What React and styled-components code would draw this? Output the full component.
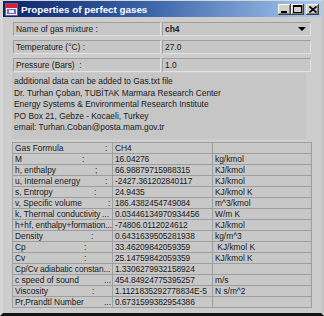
import React from 'react';
import styled, { createGlobalStyle } from 'styled-components';

const GlobalStyle = createGlobalStyle`
  html, body { margin:0; padding:0; background:#cdcdcd; }
  body { font-family: "Liberation Sans", Arial, sans-serif; }
`;

const Window = styled.div`
  width:324px;
  height:316px;
  box-sizing:border-box;
  background:#cdcdcd;
  border-top:1px solid #d6d6d6;
  border-left:3px solid #d6d6d6;
  border-right:3px solid #c4c4c4;
  border-bottom:3px solid #141414;
  display:flex;
  flex-direction:column;
  overflow:hidden;
`;

const TitleBar = styled.div`
  height:16px;
  flex:none;
  display:flex;
  align-items:center;
  padding-left:2px;
  background:linear-gradient(to right, #0a246a, #3a63a8 45%, #a6caf0);
`;

const Title = styled.span`
  margin-left:3px;
  color:#fff;
  font-weight:bold;
  font-size:9.8px;
  flex:1;
  white-space:nowrap;
`;

const Controls = styled.div`
  display:flex;
  align-items:center;
  margin-right:2px;
`;

const WinButton = styled.div`
  width:13px;
  height:11px;
  box-sizing:border-box;
  margin-left:${(p) => (p.$gap ? '2px' : '0')};
  background:#d4d0c8;
  box-shadow:inset -1px -1px #404040, inset 1px 1px #fff, inset -2px -2px #808080;
  display:flex;
  align-items:center;
  justify-content:center;
`;

const Body = styled.div`
  flex:1;
  display:flex;
  flex-direction:column;
  padding:5px 10px 0 9px;
  font-size:8.4px;
  color:#1a1a1a;
`;

const Form = styled.div`
  display:flex;
  flex-direction:column;
  gap:4px;
  margin-left:1px;
`;

const FormRow = styled.div`
  display:grid;
  grid-template-columns:148px 149px;
  column-gap:1px;
  height:14px;
`;

const Field = styled.div`
  box-sizing:border-box;
  border:1px solid #9e9e9e;
  border-right-color:#e2e2e2;
  border-bottom-color:#e2e2e2;
  background:#c7c7c7;
  padding:0 2px;
  display:flex;
  align-items:center;
  white-space:pre;
  font-weight:${(p) => (p.$bold ? 'bold' : 'normal')};
  justify-content:space-between;
`;

const Info = styled.div`
  margin-top:1px;
  width:294px;
  height:66px;
  box-sizing:border-box;
  padding:3px 2px 0;
  background:#c6c6c6;
  line-height:11.5px;
  white-space:nowrap;
`;

const Table = styled.div`
  margin-top:3px;
  width:300px;
  box-sizing:border-box;
  display:grid;
  grid-template-columns:99px 99px 98px;
  grid-auto-rows:10px;
  gap:1px;
  border:1px solid #9e9e9e;
  background:#9e9e9e;
`;

const Cell = styled.div`
  background:#c8c8c8;
  padding-left:2px;
  display:flex;
  align-items:center;
  white-space:pre;
  overflow:hidden;
  line-height:10px;
  letter-spacing:${(p) => (p.$tight ? '-0.1px' : '0')};
`;

const Key = styled.span`
  display:inline-block;
  width:${(p) => p.$at}px;
  flex:none;
`;

const AppIcon = () => (
  <svg width="13" height="13" viewBox="0 0 13 13">
    <rect x="0.5" y="0.5" width="12" height="12" fill="#f2f2f2" stroke="#6a5aa0" />
    <rect x="1" y="1" width="11" height="4" fill="#d8202a" />
    <rect x="2" y="6" width="9" height="5" fill="#7a68b8" />
    <rect x="4" y="7" width="5" height="3" fill="#e8e8ff" />
  </svg>
);

const rows = [
  ['Gas Formula', ':', 105, 'CH4', ''],
  ['M', ':', 82, '16.04276', 'kg/kmol'],
  ['h, enthalpy', ';', 95, '66.98879715988315', 'KJ/kmol'],
  ['u, Internal energy', ':', 105, '-2427.361202840117', 'KJ/kmol'],
  ['s, Entropy', ':', 94, '24.9435', 'KJ/kmol K'],
  ['v, Specific volume', ':', 108, '186.4382454749084', 'm^3/kmol'],
  ['k, Thermal conductivity', '...', 102, '0.03446134970934456', 'W/m K'],
  ['h+hf, enthalpy+formation...', '', 0, '-74806.0112024612', 'KJ/kmol'],
  ['Density', ':', 91, '0.6431639505281938', 'kg/m^3'],
  ['Cp', ':', 84, '33.46209842059359', ' KJ/kmol K'],
  ['Cv', ':', 84, '25.14759842059359', 'KJ/kmol K'],
  ['Cp/Cv adiabatic constan...', '', 0, '1.3306279932158924', ''],
  ['c speed of sound', '...', 104, '454.84924775395257', 'm/s'],
  ['Viscosity', ':', 92, '1.1121835292778834E-5', 'N s/m^2'],
  ['Pr,Prandtl Number', '...', 104, '0.6731599382954386', ''],
];

const App = () => (
  <>
    <GlobalStyle />
    <Window>
      <TitleBar>
        <AppIcon />
        <Title>Properties of perfect gases</Title>
        <Controls>
          <WinButton>
            <svg width="7" height="7" viewBox="0 0 7 7"><rect x="0" y="5" width="6" height="2" fill="#000" /></svg>
          </WinButton>
          <WinButton>
            <svg width="9" height="8" viewBox="0 0 9 8"><rect x="0.5" y="0.5" width="8" height="7" fill="none" stroke="#000" /><rect x="0" y="0" width="9" height="2" fill="#000" /></svg>
          </WinButton>
          <WinButton $gap>
            <svg width="8" height="7" viewBox="0 0 8 7"><path d="M0.5 0.5 L7.5 6.5 M7.5 0.5 L0.5 6.5" stroke="#000" strokeWidth="1.6" /></svg>
          </WinButton>
        </Controls>
      </TitleBar>
      <Body>
        <Form>
          <FormRow>
            <Field>Name of gas mixture :</Field>
            <Field $bold>
              ch4
              <svg width="8" height="4" viewBox="0 0 8 4" style={{ marginRight: 2 }}><path d="M0 0 H8 L4 4 Z" fill="#000" /></svg>
            </Field>
          </FormRow>
          <FormRow>
            <Field>Temperature (°C) :</Field>
            <Field>27.0</Field>
          </FormRow>
          <FormRow>
            <Field>Pressure (Bars)  :</Field>
            <Field>1.0</Field>
          </FormRow>
        </Form>
        <Info>
          additional data can be added to Gas.txt file<br />
          Dr. Turhan Çoban, TUBİTAK Marmara Research Center<br />
          Energy Systems &amp; Environmental Research Institute<br />
          PO Box 21, Gebze - Kocaeli, Turkey<br />
          email: Turhan.Coban@posta.mam.gov.tr
        </Info>
        <Table>
          {rows.map(([label, tail, at, value, unit]) => (
            <React.Fragment key={label}>
              <Cell $tight={!tail}>
                {tail ? (
                  <>
                    <Key $at={at - 15}>{label}</Key>
                    {tail}
                  </>
                ) : label}
              </Cell>
              <Cell $tight>{value}</Cell>
              <Cell>{unit}</Cell>
            </React.Fragment>
          ))}
        </Table>
      </Body>
    </Window>
  </>
);

export default App;
